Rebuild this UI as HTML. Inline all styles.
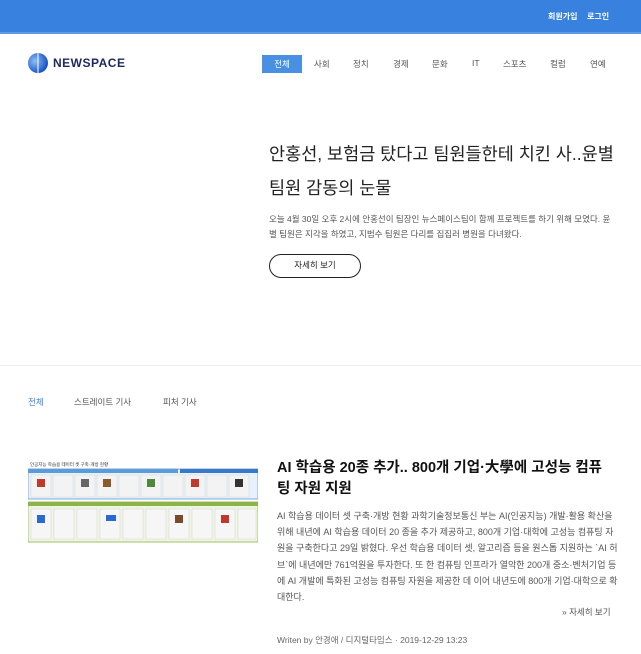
<!DOCTYPE html>
<html><head><meta charset="utf-8"><style>
*{margin:0;padding:0;box-sizing:border-box}
body{width:641px;height:654px;overflow:hidden;background:#fff;font-family:"Liberation Sans","Noto Sans CJK KR",sans-serif;color:#333;position:relative}
.top{position:absolute;left:0;top:0;width:641px;height:34px;background:#3881de;border-bottom:2px solid #5a9ae8}
.top span{position:absolute;top:11px;font-size:8px;color:#fff;font-weight:bold}
.logo{position:absolute;left:28px;top:53px;width:20px;height:20px;border-radius:50%;background:radial-gradient(circle at 35% 40%,#8fc0f5,#1a55c8 70%,#0f2f8a)}
.logo:after{content:"";position:absolute;left:9px;top:0;width:2px;height:20px;background:#fff;opacity:.5}
.logotxt{position:absolute;left:53px;top:56px;font-size:12px;font-weight:bold;color:#1c2a5e;letter-spacing:.5px}
.nav{position:absolute;top:58px;font-size:8.5px;color:#555}
.navact{position:absolute;left:262px;top:55px;width:40px;height:18px;background:#4a90e2;color:#fff;font-size:8.5px;text-align:center;line-height:18px}
h1{position:absolute;left:269px;top:137px;width:360px;font-size:17.5px;font-weight:normal;line-height:34px;color:#222}
.desc{position:absolute;left:269px;top:212px;width:346px;font-size:8.5px;line-height:15px;color:#555}
.btn{position:absolute;left:269px;top:254px;width:92px;height:24px;border:1.5px solid #222;border-radius:12px;font-size:8.5px;text-align:center;line-height:21px;color:#222}
.hr{position:absolute;left:0;top:365px;width:641px;height:1px;background:#eee}
.tab{position:absolute;top:396px;font-size:8.5px;color:#555}
.img{position:absolute;left:28px;top:461px;width:230px;height:85px}
h2{position:absolute;left:277px;top:458px;width:336px;font-size:14.5px;font-weight:bold;line-height:21px;color:#111}
.d2{position:absolute;left:277px;top:508px;width:342px;font-size:9px;line-height:16.2px;color:#555}
.more{position:absolute;left:562px;top:606px;font-size:8.5px;color:#555}
.by{position:absolute;left:277px;top:634px;font-size:8.5px;color:#666}
</style></head><body>
<div class="top"><span style="left:548px">회원가입</span><span style="left:587px">로그인</span></div>
<div class="logo"></div><div class="logotxt">NEWSPACE</div>
<div class="navact">전체</div>
<span class="nav" style="left:314px">사회</span><span class="nav" style="left:353px">정치</span><span class="nav" style="left:393px">경제</span><span class="nav" style="left:432px">문화</span><span class="nav" style="left:472px">IT</span><span class="nav" style="left:503px">스포츠</span><span class="nav" style="left:550px">컬럼</span><span class="nav" style="left:590px">연예</span>
<h1>안홍선, 보험금 탔다고 팀원들한테 치킨 사..윤별 팀원 감동의 눈물</h1>
<div class="desc">오늘 4월 30일 오후 2시에 안홍선이 팀장인 뉴스페이스팀이 함께 프로젝트를 하기 위해 모였다. 윤별 팀원은 지각을 하였고, 지범수 팀원은 다리를 집집러 병원을 다녀왔다.</div>
<div class="btn">자세히 보기</div>
<div class="hr"></div>
<span class="tab" style="left:28px;color:#3881de">전체</span><span class="tab" style="left:74px">스트레이트 기사</span><span class="tab" style="left:163px">피처 기사</span>
<svg class="img" viewBox="0 0 230 85">
<rect width="230" height="85" fill="#fff"/>
<text x="2" y="5" font-size="4.5" fill="#333" font-family="Liberation Sans,Noto Sans CJK KR,sans-serif">인공지능 학습용 데이터 셋 구축·개방 현황</text>
<rect x="0" y="8" width="230" height="30" fill="#e8f1fb" stroke="#5b9bd8" stroke-width=".8"/>
<rect x="0" y="8" width="150" height="4" fill="#5b9bd8"/><rect x="152" y="8" width="78" height="4" fill="#3a78c8"/>
<g fill="#f3f3f3" stroke="#ccc" stroke-width=".4">
<rect x="3" y="14" width="20" height="22"/><rect x="25" y="14" width="20" height="22"/><rect x="47" y="14" width="20" height="22"/><rect x="69" y="14" width="20" height="22"/><rect x="91" y="14" width="20" height="22"/><rect x="113" y="14" width="20" height="22"/><rect x="135" y="14" width="20" height="22"/><rect x="157" y="14" width="20" height="22"/><rect x="179" y="14" width="20" height="22"/><rect x="201" y="14" width="20" height="22"/></g>
<rect x="0" y="41" width="230" height="40" fill="#eef5e0" stroke="#8cb44a" stroke-width=".8"/>
<rect x="0" y="41" width="230" height="4" fill="#8cb44a"/>
<g fill="#f6f6f6" stroke="#ccc" stroke-width=".4">
<rect x="3" y="48" width="20" height="30"/><rect x="26" y="48" width="20" height="30"/><rect x="49" y="48" width="20" height="30"/><rect x="72" y="48" width="20" height="30"/><rect x="95" y="48" width="20" height="30"/><rect x="118" y="48" width="20" height="30"/><rect x="141" y="48" width="20" height="30"/><rect x="164" y="48" width="20" height="30"/><rect x="187" y="48" width="20" height="30"/><rect x="210" y="48" width="18" height="30"/></g>
<g fill="#c0392b"><rect x="9" y="18" width="8" height="8"/><rect x="53" y="18" width="8" height="8" fill="#666"/><rect x="75" y="18" width="8" height="8" fill="#8a5a2a"/><rect x="119" y="18" width="8" height="8" fill="#4a8a3a"/><rect x="163" y="18" width="8" height="8"/><rect x="207" y="18" width="8" height="8" fill="#333"/><rect x="9" y="54" width="8" height="8" fill="#2a6ad0"/><rect x="78" y="54" width="10" height="6" fill="#2a6ad0"/><rect x="147" y="54" width="8" height="8" fill="#7a4a2a"/><rect x="193" y="54" width="8" height="8"/></g>
</svg>
<h2>AI 학습용 20종 추가.. 800개 기업·大學에 고성능 컴퓨팅 자원 지원</h2>
<div class="d2">AI 학습용 데이터 셋 구축·개방 현황 과학기술정보통신 부는 AI(인공지능) 개발·활용 확산을 위해 내년에 AI 학습용 데이터 20 종을 추가 제공하고, 800개 기업·대학에 고성능 컴퓨팅 자원을 구축한다고 29일 밝혔다. 우선 학습용 데이터 셋, 알고리즘 등을 원스톱 지원하는 `AI 허브`에 내년에만 761억원을 투자한다. 또 한 컴퓨팅 인프라가 열악한 200개 중소·벤처기업 등에 AI 개발에 특화된 고성능 컴퓨팅 자원을 제공한 데 이어 내년도에 800개 기업·대학으로 확대한다.</div>
<div class="more">» 자세히 보기</div>
<div class="by">Writen by 안경애 / 디지털타임스 · 2019-12-29 13:23</div>
</body></html>
